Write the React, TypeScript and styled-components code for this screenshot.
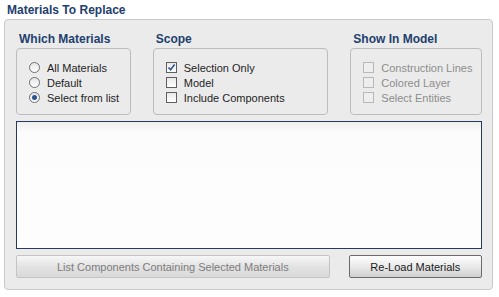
import React from 'react'
import styled, { createGlobalStyle } from 'styled-components'

const GlobalStyle = createGlobalStyle`
  html, body {
    margin: 0;
    padding: 0;
    background: #ffffff;
  }
  body {
    font-family: "Liberation Sans", Arial, sans-serif;
    font-size: 11px;
    color: #1e1e1e;
  }
`

const Page = styled.div`
  width: 499px;
  height: 297px;
  box-sizing: border-box;
  padding: 3px 6px 0 4px;
  background: #ffffff;
`

const Title = styled.div`
  height: 15px;
  line-height: 15px;
  padding-left: 3px;
  font-weight: bold;
  font-size: 12px;
  color: #22406e;
`

const Panel = styled.div`
  margin-top: 1px;
  height: 271px;
  box-sizing: border-box;
  border: 1px solid #c9c9c9;
  border-radius: 4px;
  background: #ebebeb;
  padding: 12px 10px 0 11px;
  display: flex;
  flex-direction: column;
`

const GroupsRow = styled.div`
  display: flex;
  gap: 22px;
`

const Group = styled.div<{ $width: number }>`
  width: ${p => p.$width}px;
  display: flex;
  flex-direction: column;
`

const GroupLabel = styled.div`
  height: 14px;
  line-height: 14px;
  padding-left: 3px;
  margin-bottom: 2px;
  font-weight: bold;
  font-size: 12px;
  color: #22406e;
`

const GroupBox = styled.div`
  height: 67px;
  box-sizing: border-box;
  border: 1px solid #bcbcbc;
  border-radius: 4px;
  padding: 11px 0 0 12px;
  display: flex;
  flex-direction: column;
`

const Option = styled.div<{ $disabled?: boolean }>`
  height: 15px;
  display: flex;
  align-items: center;
  gap: 7px;
  font-size: 11px;
  color: ${p => (p.$disabled ? '#8d8d8d' : '#1e1e1e')};
  white-space: nowrap;
`

const Radio = styled.span<{ $checked?: boolean }>`
  width: 11px;
  height: 11px;
  box-sizing: border-box;
  border-radius: 50%;
  border: 1px solid #6f6f6f;
  background: linear-gradient(#e6e6e6, #ffffff);
  display: flex;
  align-items: center;
  justify-content: center;
  &::after {
    content: '';
    width: 5px;
    height: 5px;
    border-radius: 50%;
    background: ${p => (p.$checked ? '#2c5394' : 'transparent')};
  }
`

const Check = styled.span<{ $disabled?: boolean }>`
  width: 11px;
  height: 11px;
  box-sizing: border-box;
  border: 1px solid ${p => (p.$disabled ? '#b8b8b8' : '#5f5f5f')};
  background: ${p => (p.$disabled ? '#eeeeee' : 'linear-gradient(#e9e9e9, #ffffff)')};
  display: flex;
  align-items: center;
  justify-content: center;
`

const ListBox = styled.div`
  margin-top: 6px;
  height: 128px;
  box-sizing: border-box;
  border: 1px solid #263a5c;
  background: linear-gradient(#eeeeee 0px, #fcfcfc 10px, #fdfdfd 100%);
`

const ButtonRow = styled.div`
  margin-top: 6px;
  display: flex;
  gap: 19px;
`

const Button = styled.div<{ $width: number; $disabled?: boolean }>`
  width: ${p => p.$width}px;
  height: 23px;
  box-sizing: border-box;
  border: 1px solid ${p => (p.$disabled ? '#c4c4c4' : '#6b6b6b')};
  border-radius: 2px;
  background: ${p =>
    p.$disabled
      ? 'linear-gradient(#f7f7f7, #e3e3e3 50%, #d9d9d9)'
      : 'linear-gradient(#fdfdfd, #eaeaea 50%, #cfcfcf)'};
  color: ${p => (p.$disabled ? '#7d7d7d' : '#1a1a1a')};
  display: flex;
  align-items: center;
  justify-content: center;
  font-size: 11px;
`

function CheckMark() {
  return (
    <svg width="9" height="9" viewBox="0 0 9 9">
      <path d="M1.5 4.5 L3.6 6.8 L7.6 1.6" fill="none" stroke="#2c5394" strokeWidth="1.6" />
    </svg>
  )
}

const materials = ['All Materials', 'Default', 'Select from list']
const scope = [
  { label: 'Selection Only', checked: true },
  { label: 'Model', checked: false },
  { label: 'Include Components', checked: false },
]
const showIn = ['Construction Lines', 'Colored Layer', 'Select Entities']

export default function App() {
  return (
    <>
      <GlobalStyle />
      <Page>
        <Title>Materials To Replace</Title>
        <Panel>
          <GroupsRow>
            <Group $width={115}>
              <GroupLabel>Which Materials</GroupLabel>
              <GroupBox>
                {materials.map((m, i) => (
                  <Option key={m}>
                    <Radio $checked={i === 2} />
                    {m}
                  </Option>
                ))}
              </GroupBox>
            </Group>
            <Group $width={176}>
              <GroupLabel>Scope</GroupLabel>
              <GroupBox>
                {scope.map(s => (
                  <Option key={s.label}>
                    <Check>{s.checked && <CheckMark />}</Check>
                    {s.label}
                  </Option>
                ))}
              </GroupBox>
            </Group>
            <Group $width={132}>
              <GroupLabel>Show In Model</GroupLabel>
              <GroupBox>
                {showIn.map(s => (
                  <Option key={s} $disabled>
                    <Check $disabled />
                    {s}
                  </Option>
                ))}
              </GroupBox>
            </Group>
          </GroupsRow>
          <ListBox />
          <ButtonRow>
            <Button $width={315} $disabled>
              List Components Containing Selected Materials
            </Button>
            <Button $width={134}>Re-Load Materials</Button>
          </ButtonRow>
        </Panel>
      </Page>
    </>
  )
}
